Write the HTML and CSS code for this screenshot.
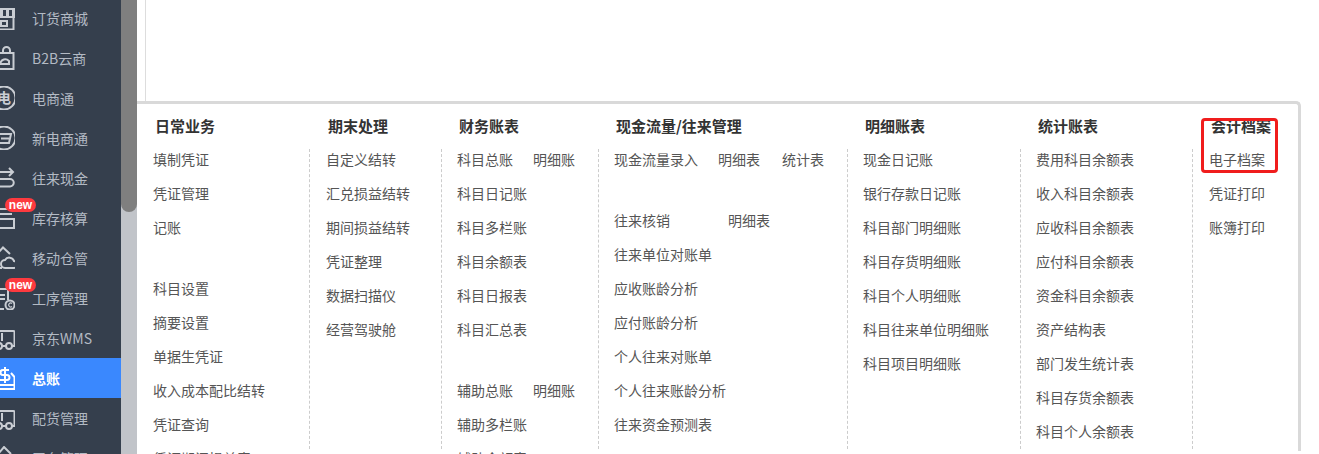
FILE: index.html
```html
<!DOCTYPE html>
<html lang="zh-CN">
<head>
  <meta charset="UTF-8"/>
  <title>总账</title>
  <link rel="stylesheet" href="styles.css">
</head>
<body>
  <nav class="sidebar">
    <a class="nav-item">
      <svg class="nav-icon" viewBox="0 0 15 24"><path class="solid" d="M-2 2H3V10H-2ZM6 2H9V10H6ZM12 2H15V10H12Z"/><path d="M-2 3H14V11H-2Z"/><path d="M13.500 11V23.500H-2M1 15H7V20H1Z"/></svg>
      订货商城
    </a>
    <a class="nav-item">
      <svg class="nav-icon" viewBox="0 0 15 24"><path d="M3 7V4.500A3.500 3.500 0 0 1 10 4.500V7"/><path d="M-2 7H13.500V23H-2Z"/><path d="M0 18C1 13 6 12 9 15V18Z"/></svg>
      B2B云商
    </a>
    <a class="nav-item">
      <svg class="nav-icon" viewBox="0 0 15 24"><circle cx="4" cy="12" r="11.500"/><text x="-3" y="17" class="nav-glyph">电</text></svg>
      电商通
    </a>
    <a class="nav-item">
      <svg class="nav-icon" viewBox="0 0 15 24"><circle cx="4" cy="12" r="11.500"/><path d="M-1 8H11L9 17H0M1 12.500H9"/></svg>
      新电商通
    </a>
    <a class="nav-item">
      <svg class="nav-icon" viewBox="0 0 15 24"><path d="M-3 6H13M9 2L13 6L9 10M-3 13H10A3.500 3.500 0 0 1 10 20.500H-3"/></svg>
      往来现金
    </a>
    <a class="nav-item">
      <span class="badge">new</span>
      <svg class="nav-icon" viewBox="0 0 15 24"><path d="M-3 3H13M-3 13H14V22H-3M-3 8H12"/></svg>
      库存核算
    </a>
    <a class="nav-item">
      <svg class="nav-icon" viewBox="0 0 15 24"><path d="M-3 8L3 1.500L10 8M-3 22H2"/><path d="M5 22H13A3.500 3.500 0 0 0 14 15A5 5 0 0 0 5 14A4 4 0 0 0 5 22Z"/></svg>
      移动仓管
    </a>
    <a class="nav-item">
      <span class="badge">new</span>
      <svg class="nav-icon" viewBox="0 0 15 24"><path d="M-3 3H8V14M-3 23H4M0 9H5M0 13H5"/><circle cx="10" cy="19" r="4.500"/><path class="fine" d="M12 17.500A2 2 0 1 0 12 20.500"/></svg>
      工序管理
    </a>
    <a class="nav-item">
      <svg class="nav-icon" viewBox="0 0 15 24"><path d="M0 5H13.500A1 1 0 0 1 14.500 6V20H12M6 20H2M0 10H-3M2 7V15"/><circle cx="9" cy="20" r="3"/><circle cx="-1" cy="20" r="3"/></svg>
      京东WMS
    </a>
    <a class="nav-item active">
      <svg class="nav-icon" viewBox="0 0 15 24"><path d="M9 4H3A2 2 0 0 0 3 9H7A2 2 0 0 1 7 14H0M5 1V17"/><path d="M-2 12V23H14.500V11L11 7M-2 19H14"/></svg>
      总账
    </a>
    <a class="nav-item">
      <svg class="nav-icon" viewBox="0 0 15 24"><path d="M0 5H13.500A1 1 0 0 1 14.500 6V20H12M6 20H2M0 10H-3M2 7V15"/><circle cx="9" cy="20" r="3"/><circle cx="-1" cy="20" r="3"/></svg>
      配货管理
    </a>
    <a class="nav-item">
      <svg class="nav-icon" viewBox="0 0 15 24"><path d="M-2 8L4 1L11 8"/></svg>
      平台管理
    </a>
  </nav>

  <div class="scroll-track"><div class="scroll-thumb"></div></div>

  <main class="main">
    <div class="top-area"></div>
    <section class="panel">
      <div class="col col-first">
        <h3>日常业务</h3>
        <div class="col-body">
          <div class="row">填制凭证</div>
          <div class="row">凭证管理</div>
          <div class="row">记账</div>
          <div class="gap"></div>
          <div class="row">科目设置</div>
          <div class="row">摘要设置</div>
          <div class="row">单据生凭证</div>
          <div class="row">收入成本配比结转</div>
          <div class="row">凭证查询</div>
          <div class="row">凭证期间损益表</div>
        </div>
      </div>
      <div class="col col-wide-pad">
        <h3>期末处理</h3>
        <div class="col-body">
          <div class="row">自定义结转</div>
          <div class="row">汇兑损益结转</div>
          <div class="row">期间损益结转</div>
          <div class="row">凭证整理</div>
          <div class="row">数据扫描仪</div>
          <div class="row">经营驾驶舱</div>
        </div>
      </div>
      <div class="col">
        <h3>财务账表</h3>
        <div class="col-body">
          <div class="row"><span>科目总账</span><span>明细账</span></div>
          <div class="row">科目日记账</div>
          <div class="row">科目多栏账</div>
          <div class="row">科目余额表</div>
          <div class="row">科目日报表</div>
          <div class="row">科目汇总表</div>
          <div class="gap"></div>
          <div class="row"><span>辅助总账</span><span>明细账</span></div>
          <div class="row">辅助多栏账</div>
          <div class="row">辅助余额表</div>
        </div>
      </div>
      <div class="col">
        <h3>现金流量/往来管理</h3>
        <div class="col-body">
          <div class="row"><span>现金流量录入</span><span>明细表</span><span class="nudge">统计表</span></div>
          <div class="gap"></div>
          <div class="row"><span>往来核销</span><span class="far">明细表</span></div>
          <div class="row">往来单位对账单</div>
          <div class="row">应收账龄分析</div>
          <div class="row">应付账龄分析</div>
          <div class="row">个人往来对账单</div>
          <div class="row">个人往来账龄分析</div>
          <div class="row">往来资金预测表</div>
        </div>
      </div>
      <div class="col">
        <h3>明细账表</h3>
        <div class="col-body">
          <div class="row">现金日记账</div>
          <div class="row">银行存款日记账</div>
          <div class="row">科目部门明细账</div>
          <div class="row">科目存货明细账</div>
          <div class="row">科目个人明细账</div>
          <div class="row">科目往来单位明细账</div>
          <div class="row">科目项目明细账</div>
        </div>
      </div>
      <div class="col">
        <h3>统计账表</h3>
        <div class="col-body">
          <div class="row">费用科目余额表</div>
          <div class="row">收入科目余额表</div>
          <div class="row">应收科目余额表</div>
          <div class="row">应付科目余额表</div>
          <div class="row">资金科目余额表</div>
          <div class="row">资产结构表</div>
          <div class="row">部门发生统计表</div>
          <div class="row">科目存货余额表</div>
          <div class="row">科目个人余额表</div>
        </div>
      </div>
      <div class="col col-wide-pad">
        <h3>会计档案</h3>
        <div class="col-body">
          <div class="row">电子档案</div>
          <div class="row">凭证打印</div>
          <div class="row">账簿打印</div>
        </div>
        <div class="red-box"></div>
      </div>
    </section>
  </main>
</body>
</html>
```

FILE: styles.css
```css
html, body { margin:0; padding:0; height:100%; overflow:hidden; }
body { display:flex; background:#fff; font-family:"Noto Sans CJK SC", "Noto Sans", sans-serif; font-size:14px; color:#555; }

.sidebar { width:121px; flex:none; height:454px; overflow:hidden; background:#353f4d; }
.nav-item { position:relative; display:flex; align-items:center; height:40px; color:#b3bac4; }
.nav-item:first-child { margin-top:-2px; }
.nav-item.active { background:#3a88fe; color:#fff; font-weight:bold; }
.nav-icon { width:15px; height:24px; margin-right:17px; flex:none; fill:none; stroke:#c9cdd3; stroke-width:2; }
.nav-icon .solid { fill:#c9cdd3; stroke:none; }
.nav-icon .fine { stroke-width:1.2; }
.nav-glyph { font-size:14px; fill:#c9cdd3; stroke:none; font-weight:bold; }
.active .nav-icon { stroke:#fff; }
.badge { position:absolute; left:5px; top:0; z-index:1; width:31px; height:14px; line-height:14px; text-align:center; border-radius:7px; background:#fd3a3f; color:#fff; font-family:"Liberation Sans", Arial, sans-serif; font-size:12px; font-weight:bold; }

.scroll-track { width:16px; flex:none; background:#c1c4c9; }
.scroll-thumb { height:212px; background:#7f7f7f; border-radius:0 0 8px 8px; }

.main { flex:1; min-width:0; }
.top-area { height:101px; margin-left:8px; border-left:1px solid #ddd; }
.panel { display:grid; grid-template-columns:172px 132px 157px 249px 173px 172px 106px; width:1164px; height:350px; box-sizing:border-box; border-top:3px solid #d9d9d9; border-right:3px solid #d9d9d9; border-radius:0 5px 0 0; }

.col { position:relative; min-width:0; }
.col h3 { margin:12px 0 13px 18px; font-size:15px; line-height:20px; font-weight:bold; color:#333; }
.col-body { height:300px; padding-left:15px; border-left:1px dashed #ccc; white-space:nowrap; }
.col-first .col-body { padding-left:16px; border-left:none; }
.col-wide-pad h3 { margin-left:19px; }
.col-wide-pad .col-body { padding-left:16px; }

.row { display:flex; gap:20px; height:20px; line-height:20px; margin-bottom:14px; }
.gap { height:27px; }
.nudge { margin-left:2px; }
.far { margin-left:38px; }

.red-box { position:absolute; left:9px; top:14px; width:71px; height:49px; border:3px solid #f01d1d; border-radius:4px; }
```
